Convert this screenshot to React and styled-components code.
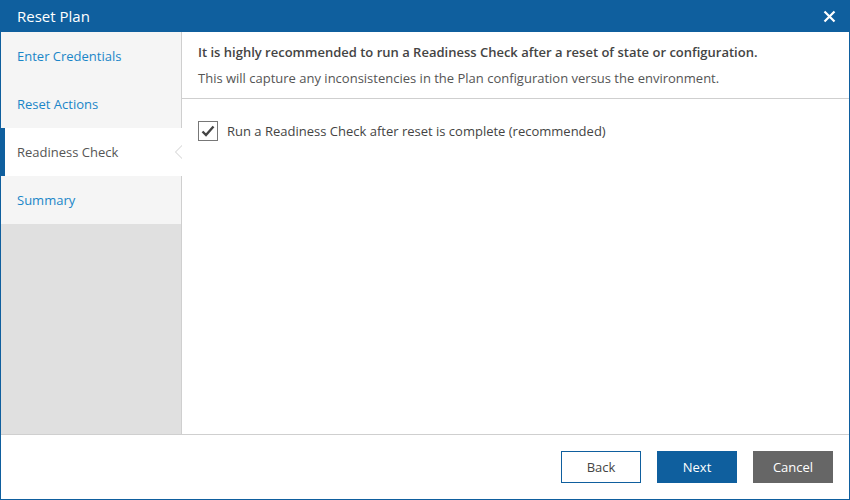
import styled, { createGlobalStyle } from 'styled-components'

const steps = ['Enter Credentials', 'Reset Actions', 'Readiness Check', 'Summary']

function App() {
  const active = 2
  return (
    <>
      <Global />
      <Dialog>
        <Header>
          <Title>Reset Plan</Title>
          <Close aria-label="close">
            <svg width="13" height="13" viewBox="0 0 13 13">
              <path d="M1.5 1.5 L11.5 11.5 M11.5 1.5 L1.5 11.5" stroke="#fff" strokeWidth="2.2" />
            </svg>
          </Close>
        </Header>
        <Body>
          <Sidebar>
            {steps.map((s, i) => (
              <Step key={s} active={i === active}>{s}</Step>
            ))}
            <Filler />
          </Sidebar>
          <Main>
            <Intro>
              <Strong>It is highly recommended to run a Readiness Check after a reset of state or configuration.</Strong>
              <Note>This will capture any inconsistencies in the Plan configuration versus the environment.</Note>
            </Intro>
            <Options>
              <CheckRow>
                <Box>
                  <svg width="14" height="12" viewBox="0 0 14 12">
                    <path d="M1.5 6.5 L5 10 L12.5 1.5" stroke="#444" strokeWidth="2.4" fill="none" />
                  </svg>
                </Box>
                Run a Readiness Check after reset is complete (recommended)
              </CheckRow>
            </Options>
          </Main>
        </Body>
        <Footer>
          <Button variant="outline">Back</Button>
          <Button variant="primary">Next</Button>
          <Button variant="grey">Cancel</Button>
        </Footer>
      </Dialog>
    </>
  )
}

const Global = createGlobalStyle`
  body {
    margin: 0;
    font-family: "Open Sans", "Noto Sans", sans-serif;
    background: #fff;
  }
`

const Dialog = styled.div`
  width: 850px;
  height: 500px;
  box-sizing: border-box;
  border: 1px solid #0f5f9e;
  border-top: none;
  display: flex;
  flex-direction: column;
`

const Header = styled.div`
  height: 32px;
  margin: 0 -1px;
  background: #0f5f9e;
  display: flex;
  align-items: center;
  justify-content: space-between;
  padding: 0 14px 0 17px;
  flex-shrink: 0;
`

const Title = styled.div`
  color: #fff;
  font-size: 15px;
`

const Close = styled.div`
  display: flex;
  align-items: center;
`

const Body = styled.div`
  flex: 1;
  display: flex;
  min-height: 0;
`

const Sidebar = styled.div`
  width: 180px;
  border-right: 1px solid #cfcfcf;
  display: flex;
  flex-direction: column;
  background: #e0e0e0;
`

const Step = styled.div`
  position: relative;
  height: 48px;
  display: flex;
  align-items: center;
  padding-left: ${p => (p.active ? '12px' : '16px')};
  font-size: 13px;
  color: ${p => (p.active ? '#555' : '#1a86c8')};
  background: ${p => (p.active ? '#fff' : '#f5f5f5')};
  border-left: ${p => (p.active ? '4px solid #0f5f9e' : 'none')};
  margin-right: ${p => (p.active ? '-1px' : '0')};

  ${p => p.active && `
    &::before {
      content: '';
      position: absolute;
      right: 0;
      top: 17px;
      border-top: 7px solid transparent;
      border-bottom: 7px solid transparent;
      border-right: 7px solid #cfcfcf;
    }
    &::after {
      content: '';
      position: absolute;
      right: 0;
      top: 18px;
      border-top: 6px solid transparent;
      border-bottom: 6px solid transparent;
      border-right: 6px solid #fff;
    }
  `}
`

const Filler = styled.div`
  flex: 1;
  background: #e0e0e0;
`

const Main = styled.div`
  flex: 1;
  display: flex;
  flex-direction: column;
`

const Intro = styled.div`
  padding: 11px 16px 11px 16px;
  border-bottom: 1px solid #cfcfcf;
`

const Strong = styled.div`
  font-size: 13px;
  font-weight: 600;
  color: #444;
  line-height: 18px;
`

const Note = styled.div`
  font-size: 13px;
  color: #555;
  line-height: 18px;
  margin-top: 8px;
`

const Options = styled.div`
  padding: 22px 16px;
`

const CheckRow = styled.label`
  display: flex;
  align-items: center;
  gap: 9px;
  font-size: 13px;
  color: #444;
`

const Box = styled.span`
  width: 18px;
  height: 18px;
  border: 1px solid #777;
  display: flex;
  align-items: center;
  justify-content: center;
  background: #fff;
`

const Footer = styled.div`
  height: 64px;
  flex-shrink: 0;
  border-top: 1px solid #cfcfcf;
  display: flex;
  align-items: center;
  justify-content: flex-end;
  gap: 16px;
  padding-right: 16px;
`

const colors = {
  outline: { bg: '#fff', fg: '#444', border: '#0f5f9e' },
  primary: { bg: '#0f5f9e', fg: '#fff', border: '#0f5f9e' },
  grey: { bg: '#666', fg: '#fff', border: '#666' },
}

const Button = styled.button`
  width: 80px;
  height: 32px;
  box-sizing: border-box;
  font-family: inherit;
  font-size: 13px;
  background: ${p => colors[p.variant].bg};
  color: ${p => colors[p.variant].fg};
  border: 1px solid ${p => colors[p.variant].border};
  cursor: pointer;
`

export default App
